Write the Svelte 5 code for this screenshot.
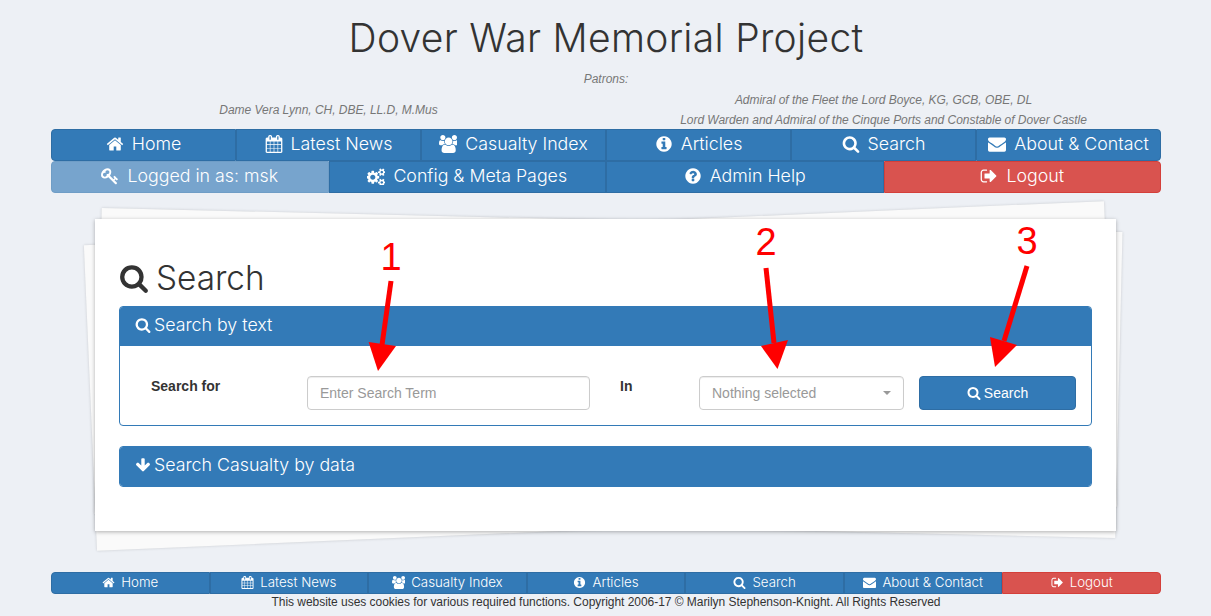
<script>
const P = {
  home: "M1472 992v480q0 26-19 45t-45 19h-384v-384h-256v384h-384q-26 0-45-19t-19-45v-480q0-1 .5-3t.5-3l575-474 575 474q1 2 1 6zm223-69l-62 74q-8 9-21 11h-3q-13 0-21-7l-692-577-692 577q-12 8-24 7-13-2-21-11l-62-74q-8-10-7-23.5t11-21.5l719-599q32-26 76-26t76 26l244 204v-195q0-14 9-23t23-9h192q14 0 23 9t9 23v408l219 182q10 8 11 21.5t-7 23.5z",
  search: "M1216 832q0-185-131.5-316.5t-316.5-131.5-316.5 131.5-131.5 316.5 131.5 316.5 316.5 131.5 316.5-131.5 131.5-316.5zm512 832q0 52-38 90t-90 38q-54 0-90-38l-343-342q-179 124-399 124-143 0-273.5-55.5t-225-150-150-225-55.5-273.5 55.5-273.5 150-225 225-150 273.5-55.5 273.5 55.5 225 150 150 225 55.5 273.5q0 220-124 399l343 343q37 37 37 90z",
  envelope: "M1792 710v794q0 66-47 113t-113 47h-1472q-66 0-113-47t-47-113v-794q44 49 101 87 362 246 497 345 57 42 92.5 65.5t94.5 48 110 24.5h2q51 0 110-24.5t94.5-48 92.5-65.5q170-123 498-345 57-39 100-87zm0-294q0 79-49 151t-122 123q-376 261-468 325-10 7-42.5 30.5t-54 38-52 32.5-57.5 27-50 9h-2q-23 0-50-9t-57.5-27-52-32.5-54-38-42.5-30.5q-91-64-262-182.5t-205-142.5q-62-42-117-115.5t-55-136.5q0-78 41.5-130t118.5-52h1472q65 0 112.5 47t47.5 113z",
  info: "M1152 1376v-160q0-14-9-23t-23-9h-96v-512q0-14-9-23t-23-9h-320q-14 0-23 9t-9 23v160q0 14 9 23t23 9h96v320h-96q-14 0-23 9t-9 23v160q0 14 9 23t23 9h448q14 0 23-9t9-23zm-128-896v-160q0-14-9-23t-23-9h-192q-14 0-23 9t-9 23v160q0 14 9 23t23 9h192q14 0 23-9t9-23zm640 416q0 209-103 385.5t-279.5 279.5-385.5 103-385.5-103-279.5-279.5-103-385.5 103-385.5 279.5-279.5 385.5-103 385.5 103 279.5 279.5 103 385.5z",
  question: "M1024 1376v-192q0-14-9-23t-23-9h-192q-14 0-23 9t-9 23v192q0 14 9 23t23 9h192q14 0 23-9t9-23zm256-672q0-88-55.5-163t-138.5-116-170-41q-243 0-371 213-15 24 8 42l132 100q7 6 19 6 16 0 25-12 53-68 86-92 34-24 86-24 48 0 85.5 26t37.5 59q0 38-20 61t-68 45q-63 28-115.5 86.5t-52.5 125.5v36q0 14 9 23t23 9h192q14 0 23-9t9-23q0-19 21.5-49.5t54.5-49.5q32-18 49-28.5t46-35 44.5-48 28-60.5 12.5-81zm384 192q0 209-103 385.5t-279.5 279.5-385.5 103-385.5-103-279.5-279.5-103-385.5 103-385.5 279.5-279.5 385.5-103 385.5 103 279.5 279.5 103 385.5z",
  signout: "M704 1440q0 4 1 20t.5 26.5-3 23.5-10 19.5-20.5 6.5h-320q-119 0-203.5-84.5t-84.5-203.5v-704q0-119 84.5-203.5t203.5-84.5h320q13 0 22.5 9.5t9.5 22.5q0 4 1 20t.5 26.5-3 23.5-10 19.5-20.5 6.5h-320q-66 0-113 47t-47 113v704q0 66 47 113t113 47h312l11.5 1 11.5 3 8 5.5 7 9 2 13.5zm928-544q0 26-19 45l-544 544q-19 19-45 19t-45-19-19-45v-288h-448q-26 0-45-19t-19-45v-384q0-26 19-45t45-19h448v-288q0-26 19-45t45-19 45 19l544 544q19 19 19 45z",
  down: "M1675 832q0 53-37 90l-651 652q-39 37-91 37-53 0-90-37l-651-652q-38-36-38-90 0-53 38-91l74-75q39-37 91-37 53 0 90 37l294 294v-704q0-52 38-90t90-38h128q52 0 90 38t38 90v704l294-294q37-37 90-37 52 0 91 37l75 75q37 39 37 91z",
  calendar: "M192 1664h288v-288h-288v288zm352 0h320v-288h-320v288zm-352-352h288v-320h-288v320zm352 0h320v-320h-320v320zm-352-384h288v-288h-288v288zm736 736h320v-288h-320v288zm-384-736h320v-288h-320v288zm768 736h288v-288h-288v288zm-384-352h320v-320h-320v320zm-352-864v-288q0-13-9.5-22.5t-22.5-9.5h-64q-13 0-22.5 9.5t-9.5 22.5v288q0 13 9.5 22.5t22.5 9.5h64q13 0 22.5-9.5t9.5-22.5zm736 864h288v-320h-288v320zm-384-384h320v-288h-320v288zm384 0h288v-288h-288v288zm32-480v-288q0-13-9.5-22.5t-22.5-9.5h-64q-13 0-22.5 9.5t-9.5 22.5v288q0 13 9.5 22.5t22.5 9.5h64q13 0 22.5-9.5t9.5-22.5zm384-64v1280q0 52-38 90t-90 38h-1408q-52 0-90-38t-38-90v-1280q0-52 38-90t90-38h128v-96q0-66 47-113t113-47h64q66 0 113 47t47 113v96h384v-96q0-66 47-113t113-47h64q66 0 113 47t47 113v96h128q52 0 90 38t38 90z",
  users: "M593 896q-162 5-265 128h-134q-82 0-138-40.5t-56-118.5q0-353 124-353 6 0 43.5 21t97.5 42.5 119 21.5q67 0 133-23-5 37-5 66 0 139 81 256zm1071 637q0 120-73 189.5t-194 69.5h-874q-121 0-194-69.5t-73-189.5q0-53 3.5-103.5t14-109 26.5-108.5 43-97.5 62-81 85.5-53.5 111.5-20q10 0 43 21.5t73 48 107 48 135 21.5 135-21.5 107-48 73-48 43-21.5q61 0 111.5 20t85.5 53.5 62 81 43 97.5 26.5 108.5 14 109 3.5 103.5zm-1024-1277q0 106-75 181t-181 75-181-75-75-181 75-181 181-75 181 75 75 181zm704 384q0 159-112.5 271.5t-271.5 112.5-271.5-112.5-112.5-271.5 112.5-271.5 271.5-112.5 271.5 112.5 112.5 271.5zm576 225q0 78-56 118.5t-138 40.5h-134q-103-123-265-128 81-117 81-256 0-29-5-66 66 23 133 23 59 0 119-21.5t97.5-42.5 43.5-21q124 0 124 353zm-128-609q0 106-75 181t-181 75-181-75-75-181 75-181 181-75 181 75 75 181z",
  key: "M832 512q0-80-56-136t-136-56-136 56-56 136q0 42 19 83-41-19-83-19-80 0-136 56t-56 136 56 136 136 56 136-56 56-136q0-42-19-83 41 19 83 19 80 0 136-56t56-136zm851 704q0 17-49 66t-66 49q-9 0-28.5-16t-36.5-33-38.5-40-24.5-26l-96 96 220 220q28 28 28 68 0 42-39 81t-81 39q-40 0-68-28l-671-671q-176 131-365 131-163 0-265.5-102.5t-102.5-265.5q0-160 95-313t248-248 313-95q163 0 265.5 102.5t102.5 265.5q0 189-131 365l355 355 96-96q-3-3-26-24.5t-40-38.5-33-36.5-16-28.5q0-17 49-66t66-49q13 0 23 10 6 6 46 44.5t82 79.5 86.5 86 73 78 28.5 41z",
  cogs: "M832 1024q0-106-75-181t-181-75-181 75-75 181 75 181 181 75 181-75 75-181zm768 512q0-52-38-90t-90-38-90 38-38 90q0 53 37.5 90.5t90.5 37.5 90.5-37.5 37.5-90.5zm0-1024q0-52-38-90t-90-38-90 38-38 90q0 53 37.5 90.5t90.5 37.5 90.5-37.5 37.5-90.5zm-384 421v185q0 10-7 19.5t-16 10.5l-155 24q-11 35-32 76 34 48 90 115 7 11 7 20 0 12-7 19-23 30-82.5 89.5t-78.5 59.5q-11 0-21-7l-115-90q-37 19-77 31-11 108-23 155-7 24-30 24h-186q-11 0-20-7.5t-10-17.5l-23-153q-34-10-75-31l-118 89q-7 7-20 7-11 0-21-8-144-133-144-160 0-9 7-19 10-14 41-53t47-61q-23-44-35-82l-152-24q-10-1-17-9.5t-7-19.5v-185q0-10 7-19.5t16-10.5l155-24q11-35 32-76-34-48-90-115-7-11-7-20 0-12 7-20 22-30 82-89t79-59q11 0 21 7l115 90q34-18 77-32 11-108 23-154 7-24 30-24h186q11 0 20 7.5t10 17.5l23 153q34 10 75 31l118-89q8-7 20-7 11 0 21 8 144 133 144 160 0 8-7 19-12 16-42 54t-45 60q23 48 34 82l152 23q10 2 17 10.5t7 19.5zm640 533v140q0 16-149 31-12 27-30 52 51 113 51 138 0 4-4 7-122 71-124 71-8 0-46-47t-52-68q-20 2-30 2t-30-2q-14 21-52 68t-46 47q-2 0-124-71-4-3-4-7 0-25 51-138-18-25-30-52-149-15-149-31v-140q0-16 149-31 13-29 30-52-51-113-51-138 0-4 4-7 4-2 35-20t59-34 30-16q8 0 46 46.5t52 67.5q20-2 30-2t30 2q51-71 92-112l6-2q4 0 124 70 4 3 4 7 0 25-51 138 17 23 30 52 149 15 149 31zm0-1024v140q0 16-149 31-12 27-30 52 51 113 51 138 0 4-4 7-122 71-124 71-8 0-46-47t-52-68q-20 2-30 2t-30-2q-14 21-52 68t-46 47q-2 0-124-71-4-3-4-7 0-25 51-138-18-25-30-52-149-15-149-31v-140q0-16 149-31 13-29 30-52-51-113-51-138 0-4 4-7 4-2 35-20t59-34 30-16q8 0 46 46.5t52 67.5q20-2 30-2t30 2q51-71 92-112l6-2q4 0 124 70 4 3 4 7 0 25-51 138 17 23 30 52 149 15 149 31z"
};
const row1 = [["home","Home"],["calendar","Latest News"],["users","Casualty Index"],["info","Articles"],["search","Search"],["envelope","About & Contact"]];
const row2 = [["key","Logged in as: msk","off"],["cogs","Config & Meta Pages",""],["question","Admin Help",""],["signout","Logout","red"]];
const foot = [...row1.map(r=>[r[0],r[1],""]),["signout","Logout","red"]];
</script>

{#snippet icon(name)}
  <svg class="ic" viewBox="0 0 1792 1792" aria-hidden="true"><path d={P[name]} fill="currentColor"/></svg>
{/snippet}

<div class="page">
  <header class="top">
    <h1 class="title">Dover War Memorial Project</h1>
    <p class="patrons-h">Patrons:</p>
    <div class="patrons">
      <div class="pl"><p>Dame Vera Lynn, CH, DBE, LL.D, M.Mus</p></div>
      <div class="pr">
        <p>Admiral of the Fleet the Lord Boyce, KG, GCB, OBE, DL</p>
        <p>Lord Warden and Admiral of the Cinque Ports and Constable of Dover Castle</p>
      </div>
    </div>
  </header>

  <nav class="nav">
    <div class="row">
      {#each row1 as [i, t]}<a class="nb">{@render icon(i)}<span>{t}</span></a>{/each}
    </div>
    <div class="row">
      {#each row2 as [i, t, c]}<a class="nb {c}">{@render icon(i)}<span>{t}</span></a>{/each}
    </div>
  </nav>

  <main class="card">
    <h2 class="hd">{@render icon("search")}<span>Search</span></h2>
    <section class="panel">
      <div class="ph">{@render icon("search")}<span>Search by text</span></div>
      <div class="pb">
        <label class="l1" for="term">Search for</label>
        <input id="term" class="ctl term" placeholder="Enter Search Term" />
        <span class="l2">In</span>
        <div class="ctl sel"><span>Nothing selected</span><i class="caret"></i></div>
        <button class="go">{@render icon("search")}<span>Search</span></button>
      </div>
    </section>
    <section class="panel closed">
      <div class="ph">{@render icon("down")}<span>Search Casualty by data</span></div>
    </section>
  </main>

  <nav class="fnav">
    {#each foot as [i, t, c]}<a class="fb {c}">{@render icon(i)}<span>{t}</span></a>{/each}
  </nav>
  <p class="copy">This website uses cookies for various required functions. Copyright 2006-17 © Marilyn Stephenson-Knight. All Rights Reserved</p>

  <svg class="marks" viewBox="0 0 1211 616" aria-hidden="true">
    <g stroke="#f00" stroke-width="5" fill="#f00">
      <line x1="391" y1="281" x2="382" y2="345"/>
      <line x1="766" y1="268" x2="774" y2="343"/>
      <line x1="1027" y1="266" x2="1004" y2="341"/>
    </g>
    <g fill="#f00">
      <polygon points="368.6,342 396,346 378,371"/>
      <polygon points="761,346 788,340 777.5,369"/>
      <polygon points="990,337 1017,345 995,367"/>
    </g>
  </svg>
  <span class="num n1">1</span>
  <span class="num n2">2</span>
  <span class="num n3">3</span>
</div>

<style>
:global(body){margin:0;background:#edf0f5;}
.page{position:relative;isolation:isolate;width:1211px;height:616px;overflow:hidden;box-sizing:border-box;padding:0 50px 0 51px;font-family:"Liberation Sans",Arial,sans-serif;color:#333;font-size:14px;}
p{margin:0;}
.ic{width:1em;height:1em;flex:none;display:block;}
.top{height:129px;overflow:hidden;}
.title{margin:0;padding-top:14px;height:48px;text-align:center;font:300 39px/48px Inter,"Noto Sans",sans-serif;letter-spacing:.3px;color:#333;}
.patrons-h{margin-top:9px;text-align:center;font-style:italic;font-size:12px;line-height:17px;color:#777;letter-spacing:-.02px;}
.patrons{display:grid;grid-template-columns:1fr 1fr;font-style:italic;font-size:12px;line-height:20px;color:#777;text-align:center;letter-spacing:-.03px;}
.pl{padding-top:12px;}
.pr{margin-top:2px;}
.nav{display:flex;flex-direction:column;}
.row{display:flex;height:32px;}
.nb,.fb{flex:1 1 0;box-sizing:border-box;display:flex;align-items:center;justify-content:center;background:#337ab7;border:1px solid #2e6da4;color:#fff;font-family:Inter,"Noto Sans",sans-serif;font-weight:300;}
.nb{font-size:17.8px;gap:8px;padding-bottom:4px;}
.nb .ic{font-size:18px;margin-top:2px;}
.nb:first-child,.fb:first-child{border-radius:4px 0 0 4px;}
.nb:last-child,.fb:last-child{border-radius:0 4px 4px 0;}
.nb.off{background:#77a4cd;border-color:#6f9dc6;}
.nb.red,.fb.red{background:#d9534f;border-color:#d43f3a;}
.card{position:relative;box-sizing:border-box;width:1021px;height:312px;margin:26px 0 0 44px;padding:24px 24px 0;background:#fff;box-shadow:0 1px 4px rgba(0,0,0,.3);}
.card::before,.card::after{content:"";position:absolute;left:0;right:0;top:3px;bottom:3px;background:#fafafa;box-shadow:0 0 3px rgba(0,0,0,.16);z-index:-1;}
.card::before{transform:translate(-5px,1px) rotate(-2.47deg);}
.card::after{transform:translate(3px,-2px) rotate(1.35deg);}
.hd{margin:0;height:63px;box-sizing:border-box;padding-top:6px;display:flex;align-items:center;gap:7px;font:300 33.3px/40px Inter,"Noto Sans",sans-serif;color:#333;}
.hd .ic{font-size:30px;}
.panel{border:1px solid #337ab7;border-radius:4px;width:973px;box-sizing:border-box;overflow:hidden;}
.ph{height:39px;box-sizing:border-box;padding:0 15px 3px;background:#337ab7;color:#fff;display:flex;align-items:center;gap:3px;font:300 17.8px/20px Inter,"Noto Sans",sans-serif;}
.ph .ic{font-size:16px;}
.panel.closed{margin-top:20px;}
.pb{height:79px;position:relative;display:flex;align-items:flex-start;}
.l1,.l2{font-weight:700;font-size:14px;line-height:16px;margin-top:32px;}
.l1{margin-left:31px;width:156px;}
.ctl{box-sizing:border-box;height:34px;margin-top:30px;border:1px solid #ccc;border-radius:4px;background:#fff;font:14px "Liberation Sans",Arial,sans-serif;color:#999;padding:0 12px;box-shadow:inset 0 1px 1px rgba(0,0,0,.075);}
.term{width:283px;outline:none;}
.term::placeholder{color:#999;opacity:1;}
.l2{margin-left:30px;width:79px;}
.sel{width:205px;display:flex;align-items:center;justify-content:space-between;padding-right:12px;}
.caret{width:0;height:0;border:4px solid transparent;border-top-color:#999;border-bottom:0;}
.go{box-sizing:border-box;width:157px;height:34px;margin:30px 0 0 15px;background:#337ab7;border:1px solid #2e6da4;border-radius:4px;color:#fff;font:14px "Liberation Sans",Arial,sans-serif;display:flex;align-items:center;justify-content:center;gap:3px;padding:0;}
.fnav{display:flex;height:22px;margin-top:41px;}
.fb{font-size:13.3px;gap:6px;padding-bottom:3px;}
.fb .ic{font-size:13px;margin-top:2px;}
.copy{text-align:center;font-size:12px;line-height:16px;color:#333;letter-spacing:-.04px;}
.marks{position:absolute;left:0;top:0;width:1211px;height:616px;pointer-events:none;}
.num{position:absolute;font:38px/40px "Liberation Sans",Arial,sans-serif;color:#f00;transform:translateX(-50%);}
.n1{left:391px;top:237px;}
.n2{left:766px;top:222px;}
.n3{left:1027px;top:221px;}
</style>
